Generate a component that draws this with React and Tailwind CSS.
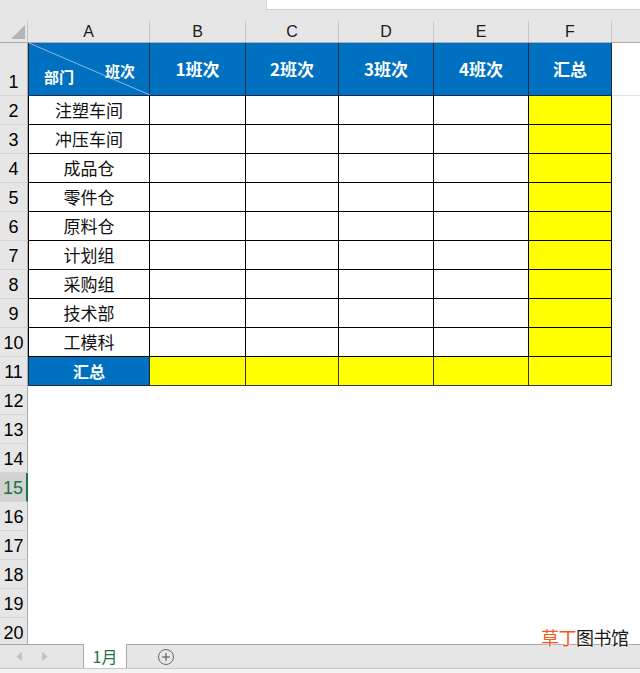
import { Plus } from 'lucide-react'

const depts = ['注塑车间', '冲压车间', '成品仓', '零件仓', '原料仓', '计划组', '采购组', '技术部', '工模科']
const cols = [
  { key: 'A', w: 'w-[122px]' },
  { key: 'B', w: 'w-[96px]' },
  { key: 'C', w: 'w-[93px]' },
  { key: 'D', w: 'w-[95px]' },
  { key: 'E', w: 'w-[95px]' },
  { key: 'F', w: 'w-[83px]' },
]
const heads = ['1班次', '2班次', '3班次', '4班次', '汇总']

const cjk = { fontFamily: '"Noto Sans CJK SC", "Noto Sans", sans-serif' }

function RowHead({ n, active }) {
  return (
    <div
      className={`w-[28px] shrink-0 flex items-end justify-center border-b border-[#d6d6d6] text-[18px] leading-[26px] ${
        active ? 'bg-[#d2d2d2] text-[#217346] border-r-2 border-r-[#217346]' : 'bg-[#e6e6e6] text-black border-r border-r-[#ababab]'
      }`}
      style={{ fontFamily: '"Liberation Sans", Arial, sans-serif' }}
    >
      {n}
    </div>
  )
}

export default function App() {
  return (
    <div className="w-[640px] h-[673px] overflow-hidden bg-white relative select-none">
      {/* 顶部编辑栏残影 */}
      <div className="h-[21px] bg-[#e6e6e6] flex">
        <div className="w-[266px]" />
        <div className="flex-1 h-[10px] bg-white border-b border-l border-[#d0d0d0]" />
      </div>

      {/* 列标 */}
      <div className="flex h-[22px] bg-[#e6e6e6] border-b border-[#ababab] text-[16px]" style={{ fontFamily: '"Liberation Sans", Arial, sans-serif' }}>
        <div className="w-[28px] shrink-0 relative border-r border-[#c8c8c8]">
          <div className="absolute right-[2px] bottom-[3px] w-0 h-0 border-l-[14px] border-l-transparent border-b-[14px] border-b-[#b4b4b4]" />
        </div>
        {cols.map((c) => (
          <div key={c.key} className={`${c.w} shrink-0 flex items-center justify-center border-r border-[#c8c8c8] text-[#1a1a1a]`}>
            {c.key}
          </div>
        ))}
        <div className="flex-1" />
      </div>

      {/* 第1行 表头 */}
      <div className="flex h-[53px]">
        <RowHead n={1} />
        <div className="w-[122px] shrink-0 relative bg-[#0070c0] border-l border-r border-b border-[#1b2b45] text-white font-bold text-[15px]" style={cjk}>
          <svg className="absolute inset-0" width="121" height="52" viewBox="0 0 121 52">
            <line x1="0" y1="0" x2="121" y2="52" stroke="#8fb8e0" strokeWidth="1" />
          </svg>
          <span className="absolute left-[15px] bottom-[7px]">部门</span>
          <span className="absolute right-[14px] top-[17px]">班次</span>
        </div>
        {heads.map((h, i) => (
          <div
            key={h}
            className={`${cols[i + 1].w} shrink-0 flex items-center justify-center bg-[#0070c0] border-r border-b border-[#1b2b45] text-white font-bold text-[17px]`}
            style={cjk}
          >
            {h}
          </div>
        ))}
        <div className="flex-1 border-b border-[#e0e0e0]" />
      </div>

      {/* 部门行 */}
      {depts.map((d, r) => (
        <div key={d} className="flex h-[29px]">
          <RowHead n={r + 2} />
          <div className="w-[122px] shrink-0 flex items-center justify-center border-l border-r border-b border-black text-[17px] text-[#111]" style={cjk}>
            {d}
          </div>
          {cols.slice(1).map((c) => (
            <div key={c.key} className={`${c.w} shrink-0 border-r border-b border-black ${c.key === 'F' ? 'bg-[#ffff00]' : 'bg-white'}`} />
          ))}
          <div className="flex-1" />
        </div>
      ))}

      {/* 汇总行 */}
      <div className="flex h-[29px]">
        <RowHead n={11} />
        <div className="w-[122px] shrink-0 flex items-center justify-center bg-[#0070c0] border-l border-r border-b border-[#1b2b45] text-white font-bold text-[16px]" style={cjk}>
          汇总
        </div>
        {cols.slice(1).map((c) => (
          <div key={c.key} className={`${c.w} shrink-0 bg-[#ffff00] border-r border-b border-[#333]`} />
        ))}
        <div className="flex-1" />
      </div>

      {/* 空行 */}
      {[12, 13, 14, 15, 16, 17, 18, 19, 20].map((n) => (
        <div key={n} className="flex h-[29px]">
          <RowHead n={n} active={n === 15} />
          <div className="flex-1" />
        </div>
      ))}

      {/* 工作表标签栏 */}
      <div className="absolute left-0 right-0 top-[644px] h-[24px] bg-[#e6e6e6] border-t border-[#a6a6a6] flex items-stretch">
        <div className="w-[83px] flex items-center gap-[20px] pl-[16px]">
          <svg width="6" height="9" viewBox="0 0 6 9">
            <polygon points="6,0 6,9 0,4.5" fill="#c4c4c4" />
          </svg>
          <svg width="6" height="9" viewBox="0 0 6 9">
            <polygon points="0,0 0,9 6,4.5" fill="#c4c4c4" />
          </svg>
        </div>
        <div className="w-[44px] -mt-px bg-white border-l border-r border-[#a6a6a6] flex flex-col">
          <div className="flex-1 flex items-center justify-center text-[#217346] text-[16px]" style={cjk}>
            1月
          </div>
          <div className="h-[2px] bg-[#217346]" />
        </div>
        <div className="w-[31px]" />
        <div className="flex items-center">
          <div className="w-[16px] h-[16px] rounded-full border border-[#6a6a6a] flex items-center justify-center text-[#4a4a4a]">
            <Plus size={12} strokeWidth={2} />
          </div>
        </div>
      </div>
      <div className="absolute left-0 right-0 top-[668px] h-[5px] bg-[#f3f3f3] border-t border-[#c8c8c8]" />

      {/* 水印 */}
      <div
        className="absolute left-[541px] top-[626px] text-[18px] leading-[22px] tracking-[-0.5px]"
        style={{ ...cjk, textShadow: '0 0 2px #fff, 0 0 2px #fff, 0 0 2px #fff' }}
      >
        <span className="text-[#f05a1a]">草丁</span>
        <span className="text-[#1a1a1a]">图书馆</span>
      </div>
    </div>
  )
}
